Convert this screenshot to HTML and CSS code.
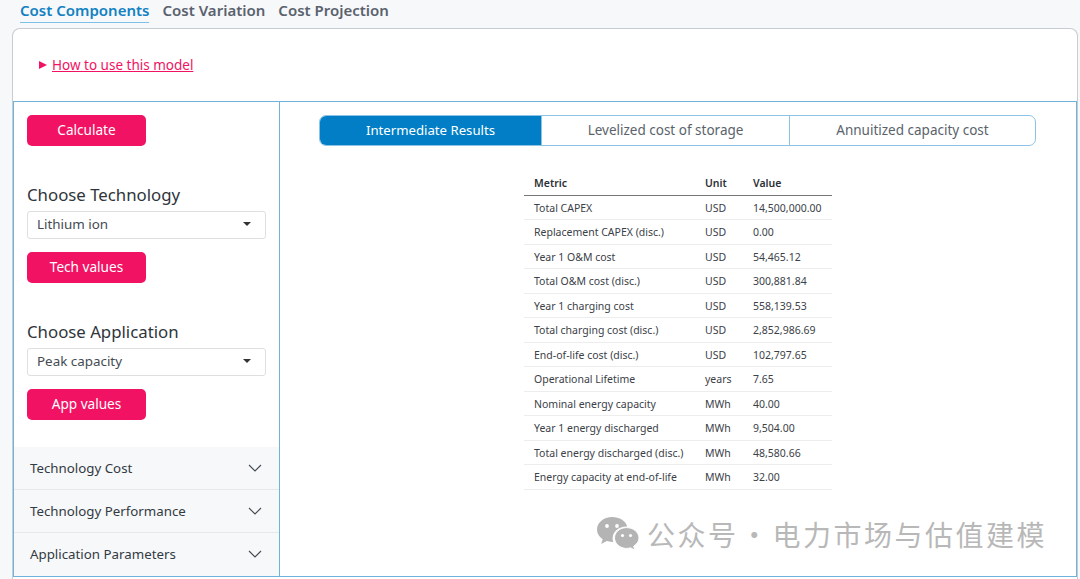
FILE: index.html
```html
<!DOCTYPE html>
<html lang="en">
<head>
    <meta charset="UTF-8">
    <meta name="viewport" content="width=device-width, initial-scale=1.0">
    <title>Cost Components</title>
    <link rel="stylesheet" href="styles.css">
</head>
<body>
    <!-- Page tabs -->
    <nav class="page-tabs">
        <a class="page-tab active">Cost Components</a>
        <a class="page-tab">Cost Variation</a>
        <a class="page-tab">Cost Projection</a>
    </nav>

    <div class="card">
        <div class="intro">
            <span class="intro-arrow"></span>
            <a class="intro-link">How to use this model</a>
        </div>

        <div class="model">
            <!-- Sidebar -->
            <aside class="sidebar">
                <div class="controls">
                    <button class="pink-btn">Calculate</button>

                    <h2 class="control-title">Choose Technology</h2>
                    <div class="select-box">
                        <span>Lithium ion</span>
                        <span class="select-caret"></span>
                    </div>
                    <button class="pink-btn">Tech values</button>

                    <h2 class="control-title">Choose Application</h2>
                    <div class="select-box">
                        <span>Peak capacity</span>
                        <span class="select-caret"></span>
                    </div>
                    <button class="pink-btn">App values</button>
                </div>

                <div class="accordion">
                    <div class="accordion-item">
                        <span>Technology Cost</span>
                        <svg class="chevron" viewBox="0 0 14 8"><path d="M1 1l6 6 6-6"/></svg>
                    </div>
                    <div class="accordion-item">
                        <span>Technology Performance</span>
                        <svg class="chevron" viewBox="0 0 14 8"><path d="M1 1l6 6 6-6"/></svg>
                    </div>
                    <div class="accordion-item">
                        <span>Application Parameters</span>
                        <svg class="chevron" viewBox="0 0 14 8"><path d="M1 1l6 6 6-6"/></svg>
                    </div>
                </div>
            </aside>

            <!-- Results -->
            <main class="results">
                <div class="result-tabs">
                    <div class="result-tab tab-one active">Intermediate Results</div>
                    <div class="result-tab tab-two">Levelized cost of storage</div>
                    <div class="result-tab tab-three">Annuitized capacity cost</div>
                </div>

                <table class="result-table">
                    <thead>
                        <tr><th class="col-metric">Metric</th><th class="col-unit">Unit</th><th class="col-value">Value</th></tr>
                    </thead>
                    <tbody>
                        <tr><td>Total CAPEX</td><td>USD</td><td>14,500,000.00</td></tr>
                        <tr><td>Replacement CAPEX (disc.)</td><td>USD</td><td>0.00</td></tr>
                        <tr><td>Year 1 O&amp;M cost</td><td>USD</td><td>54,465.12</td></tr>
                        <tr><td>Total O&amp;M cost (disc.)</td><td>USD</td><td>300,881.84</td></tr>
                        <tr><td>Year 1 charging cost</td><td>USD</td><td>558,139.53</td></tr>
                        <tr><td>Total charging cost (disc.)</td><td>USD</td><td>2,852,986.69</td></tr>
                        <tr><td>End-of-life cost (disc.)</td><td>USD</td><td>102,797.65</td></tr>
                        <tr><td>Operational Lifetime</td><td>years</td><td>7.65</td></tr>
                        <tr><td>Nominal energy capacity</td><td>MWh</td><td>40.00</td></tr>
                        <tr><td>Year 1 energy discharged</td><td>MWh</td><td>9,504.00</td></tr>
                        <tr><td>Total energy discharged (disc.)</td><td>MWh</td><td>48,580.66</td></tr>
                        <tr><td>Energy capacity at end-of-life</td><td>MWh</td><td>32.00</td></tr>
                    </tbody>
                </table>
            </main>
        </div>
    </div>

    <!-- Watermark over the page -->
    <div class="watermark">
        <svg class="wechat-icon" viewBox="0 0 42 34">
            <path class="bubble-back" d="M15 0C6.800 0 0 5.500 0 12.500c0 4 2.200 7.400 5.700 9.700L4.200 27l5.500-2.900c1.700.5 3.400.8 5.300.8h1.200c-.4-1.200-.6-2.400-.6-3.700 0-6.500 6.100-11.700 13.700-11.700h1C28.600 3.700 22.400 0 15 0z"/>
            <path class="bubble-front" d="M42 21c0-5.800-5.800-10.400-12.500-10.400S17.500 15.200 17.500 21s5.700 10.400 12 10.400c1.400 0 2.800-.2 4-.6l4.400 2.400-1.200-4C40 27 42 24.200 42 21z"/>
            <circle class="eye" cx="10" cy="9" r="1.900"/>
            <circle class="eye" cx="20" cy="9" r="1.900"/>
            <circle class="eye" cx="25.500" cy="18.500" r="1.600"/>
            <circle class="eye" cx="33.500" cy="18.500" r="1.600"/>
        </svg>
        <span class="watermark-text">公众号 · 电力市场与估值建模</span>
    </div>
</body>
</html>
```

FILE: styles.css
```css
:root {
    --pink: #f21263;
    --blue: #017ec5;
    --line-blue: #6fb3dc;
    --text: #333a42;
    --page-bg: #f7f8fa;
}

* {
    box-sizing: border-box;
    margin: 0;
    padding: 0;
}

html, body {
    height: 579px;
    overflow: hidden;
}

body {
    background-color: var(--page-bg);
    color: var(--text);
    font-family: "Noto Sans", "Open Sans", sans-serif;
    font-size: 13.3px;
}

.page-tabs {
    display: flex;
    gap: 13px;
    height: 28px;
    padding-left: 20px;
}

.page-tab {
    height: 23px;
    font-size: 15px;
    font-weight: 600;
    line-height: 21px;
    color: #5a626e;
}

.page-tab.active {
    color: #1282c2;
    border-bottom: 1px solid #7cc0e8;
}

.card {
    height: 551px;
    margin: 0 2px 0 12px;
    background-color: #fff;
    border: 1px solid #c9cccf;
    border-bottom: none;
    border-radius: 8px 8px 0 0;
}

.intro {
    display: flex;
    align-items: center;
    height: 71px;
    margin-bottom: 1px;
    padding-left: 26px;
    gap: 5px;
}

.intro-arrow {
    width: 0;
    height: 0;
    border-left: 8px solid var(--pink);
    border-top: 4.5px solid transparent;
    border-bottom: 4.5px solid transparent;
}

.intro-link {
    color: var(--pink);
    font-size: 13.5px;
    text-decoration: underline;
}

.model {
    display: flex;
    height: 476px;
    border: 1px solid var(--line-blue);
}

/* Sidebar */
.sidebar {
    display: flex;
    flex-direction: column;
    justify-content: space-between;
    width: 266px;
    border-right: 1px solid var(--line-blue);
}

.controls {
    padding: 13px 13px 0;
}

.pink-btn {
    display: block;
    width: 119px;
    height: 31px;
    padding-bottom: 2px;
    background-color: var(--pink);
    color: #fff;
    border: none;
    border-radius: 5px;
    font-family: inherit;
    font-size: 13.6px;
}

.control-title {
    height: 26px;
    margin-top: 36px;
    margin-bottom: 3px;
    font-size: 16.8px;
    font-weight: 400;
    line-height: 26px;
    color: #2f353b;
}

.select-box {
    display: flex;
    justify-content: space-between;
    align-items: center;
    width: 239px;
    height: 28px;
    margin-bottom: 13px;
    padding: 0 14px 2px 9px;
    background-color: #fff;
    border: 1px solid #dedfe1;
    border-radius: 3px;
    font-size: 13.4px;
    color: #444b52;
}

.select-caret {
    width: 0;
    height: 0;
    border-top: 4px solid #333;
    border-left: 4px solid transparent;
    border-right: 4px solid transparent;
}

.accordion-item {
    display: flex;
    justify-content: space-between;
    align-items: center;
    height: 43px;
    padding: 0 17px 1px 16px;
    background-color: var(--page-bg);
    border-bottom: 1px solid #e6e8ea;
    font-size: 13.3px;
    color: #333a42;
}

.accordion-item:last-child {
    border-bottom: none;
}

.chevron {
    width: 14px;
    height: 8px;
    fill: none;
    stroke: #444b52;
    stroke-width: 1.1;
}

/* Results */
.results {
    flex: 1;
    padding: 13px 40px 0 39px;
}

.result-tabs {
    display: flex;
    height: 31px;
    margin-bottom: 25px;
    border: 1px solid #8cc3e4;
    border-radius: 7px;
    overflow: hidden;
}

.result-tab {
    display: flex;
    align-items: center;
    justify-content: center;
    padding-bottom: 2px;
    font-size: 13.5px;
    color: #5a636c;
    border-right: 1px solid #8cc3e4;
}

.result-tab:last-child {
    border-right: none;
}

.result-tab.active {
    background-color: var(--blue);
    color: #fff;
    font-size: 13.2px;
}

.tab-one { width: 222px; }
.tab-two { width: 248px; }
.tab-three { flex: 1; }

.result-table {
    width: 308px;
    margin-left: 205px;
    border-collapse: collapse;
    table-layout: fixed;
    font-size: 10.5px;
    color: #3b4148;
}

.result-table th {
    height: 24px;
    padding: 0 10px;
    text-align: left;
    font-weight: 600;
    color: #2b3036;
    border-bottom: 1px solid #777;
}

.result-table td {
    height: 24.5px;
    padding: 1px 10px 0;
    border-bottom: 1px solid #eceded;
    white-space: nowrap;
}

.col-metric { width: 171px; }
.col-unit { width: 48px; }
.col-value { width: 89px; }

/* Watermark */
.watermark {
    position: absolute;
    left: 597px;
    top: 517px;
    display: flex;
    align-items: center;
    gap: 8px;
    color: #b8b8b8;
    font-family: "Noto Sans CJK SC", sans-serif;
    font-size: 28px;
    letter-spacing: 2.5px;
    word-spacing: -7px;
    white-space: nowrap;
}

.watermark-text {
    line-height: 34px;
}

.wechat-icon {
    width: 42px;
    height: 34px;
}

.bubble-back {
    fill: #b4b4b4;
}

.bubble-front {
    fill: #b4b4b4;
    stroke: #fff;
    stroke-width: 1;
}

.eye {
    fill: #fff;
}
```
